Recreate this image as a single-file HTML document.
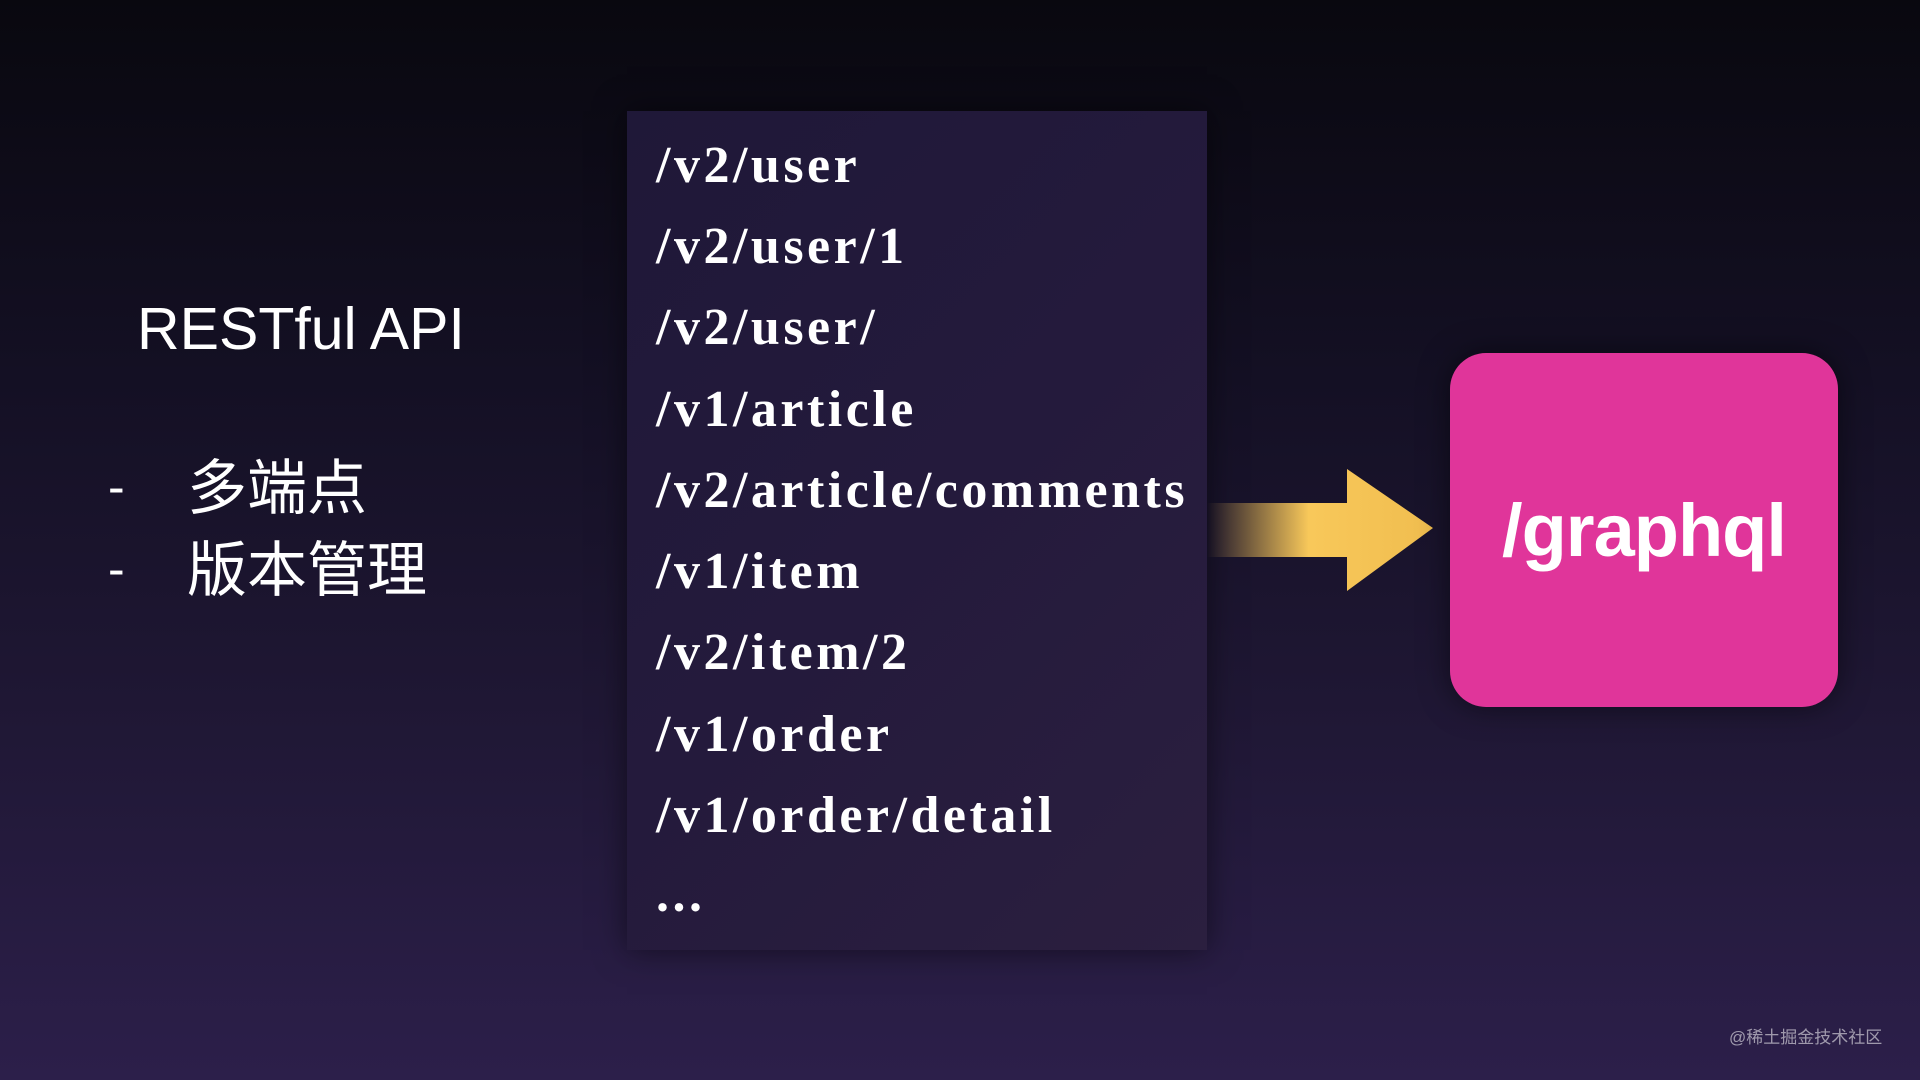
<!DOCTYPE html>
<html><head><meta charset="utf-8"><style>
html,body{margin:0;padding:0}
body{width:1920px;height:1080px;overflow:hidden;position:relative;
background:linear-gradient(180deg,#09080f 0%,#141024 35%,#1f1734 65%,#2c1f4a 100%);
font-family:"Liberation Sans","Noto Sans CJK SC",sans-serif;color:#fff}
.panel{position:absolute;left:627px;top:111px;width:580px;height:839px;
background:linear-gradient(135deg,#1f1838 0%,#241a3c 50%,#2b1f3f 100%);box-shadow:0 0 30px rgba(0,0,0,.5)}
.item{position:absolute;left:656px;font-family:"Liberation Serif",serif;font-weight:bold;font-size:52px;letter-spacing:3.5px;line-height:1;white-space:nowrap}
.t{position:absolute;white-space:nowrap;line-height:1}
.box{position:absolute;left:1450px;top:353px;width:388px;height:354px;border-radius:36px;background:#e0359a;box-shadow:0 0 30px rgba(0,0,0,.5)}
</style></head><body>
<div class="t" style="left:137px;top:300px;font-size:59px">RESTful API</div>
<div class="t" style="left:108px;top:462px;font-size:50px">-</div>
<div class="t" style="left:187px;top:459px;font-size:60px">多端点</div>
<div class="t" style="left:108px;top:544px;font-size:50px">-</div>
<div class="t" style="left:187px;top:541px;font-size:60px">版本管理</div>
<div class="panel"></div>
<div class="item" style="top:140px">/v2/user</div>
<div class="item" style="top:221px">/v2/user/1</div>
<div class="item" style="top:302px">/v2/user/</div>
<div class="item" style="top:384px">/v1/article</div>
<div class="item" style="top:465px">/v2/article/comments</div>
<div class="item" style="top:546px">/v1/item</div>
<div class="item" style="top:627px">/v2/item/2</div>
<div class="item" style="top:709px">/v1/order</div>
<div class="item" style="top:790px">/v1/order/detail</div>
<div class="item" style="top:869px">...</div>
<svg style="position:absolute;left:1207px;top:465px" width="230" height="130">
<defs><linearGradient id="g" x1="0" x2="1" y1="0" y2="0">
<stop offset="0" stop-color="#f5c456" stop-opacity="0"/><stop offset="0.45" stop-color="#f8c85a" stop-opacity="1"/><stop offset="1" stop-color="#f0bd4f"/></linearGradient></defs>
<polygon points="0,38 140,38 140,4 226,63 140,126 140,92 0,92" fill="url(#g)"/>
</svg>
<div class="box"></div>
<div class="t" style="left:1450px;width:388px;text-align:center;top:494px;font-size:74px;font-weight:bold;letter-spacing:-1px">/graphql</div>
<div class="t" style="left:1729px;top:1029px;font-size:17px;color:rgba(255,255,255,.55)">@稀土掘金技术社区</div>
</body></html>
